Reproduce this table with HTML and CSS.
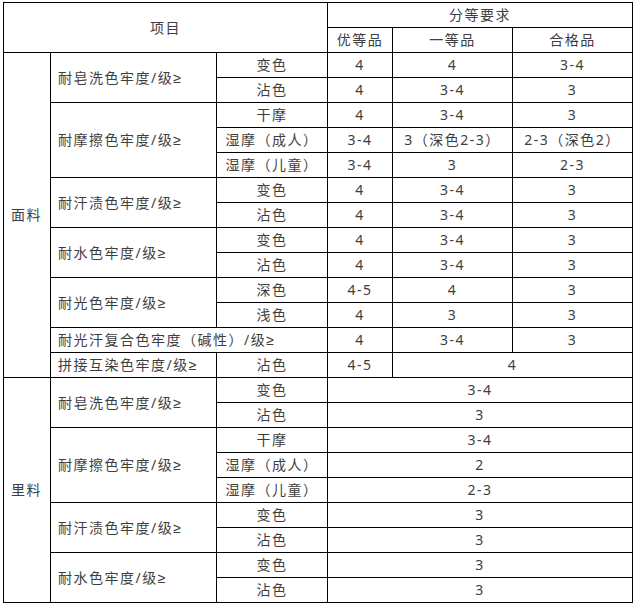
FILE: index.html
```html
<!DOCTYPE html>
<html lang="zh">
<head>
<meta charset="utf-8">
<link rel="stylesheet" href="styles.css">
</head>
<body>
<table class="spec">
<colgroup>
<col class="c1"><col class="c2"><col class="c3"><col class="c4"><col class="c5"><col class="c6">
</colgroup>
<tbody>
<tr><td colspan="3" rowspan="2">项目</td><td colspan="3">分等要求</td></tr>
<tr><td>优等品</td><td>一等品</td><td>合格品</td></tr>

<tr><td rowspan="13" class="grp">面料</td><td rowspan="2" class="item">耐皂洗色牢度/级<span class="ge">≥</span></td><td>变色</td><td>4</td><td>4</td><td>3-4</td></tr>
<tr><td>沾色</td><td>4</td><td>3-4</td><td>3</td></tr>
<tr><td rowspan="3" class="item">耐摩擦色牢度/级<span class="ge">≥</span></td><td>干摩</td><td>4</td><td>3-4</td><td>3</td></tr>
<tr><td>湿摩（成人）</td><td>3-4</td><td>3（深色2-3）</td><td>2-3（深色2）</td></tr>
<tr><td>湿摩（儿童）</td><td>3-4</td><td>3</td><td>2-3</td></tr>
<tr><td rowspan="2" class="item">耐汗渍色牢度/级<span class="ge">≥</span></td><td>变色</td><td>4</td><td>3-4</td><td>3</td></tr>
<tr><td>沾色</td><td>4</td><td>3-4</td><td>3</td></tr>
<tr><td rowspan="2" class="item">耐水色牢度/级<span class="ge">≥</span></td><td>变色</td><td>4</td><td>3-4</td><td>3</td></tr>
<tr><td>沾色</td><td>4</td><td>3-4</td><td>3</td></tr>
<tr><td rowspan="2" class="item">耐光色牢度/级<span class="ge">≥</span></td><td>深色</td><td>4-5</td><td>4</td><td>3</td></tr>
<tr><td>浅色</td><td>4</td><td>3</td><td>3</td></tr>
<tr><td colspan="2" class="item">耐光汗复合色牢度（碱性）/级<span class="ge">≥</span></td><td>4</td><td>3-4</td><td>3</td></tr>
<tr><td class="item">拼接互染色牢度/级<span class="ge">≥</span></td><td>沾色</td><td>4-5</td><td colspan="2">4</td></tr>

<tr><td rowspan="9" class="grp">里料</td><td rowspan="2" class="item">耐皂洗色牢度/级<span class="ge">≥</span></td><td>变色</td><td colspan="3">3-4</td></tr>
<tr><td>沾色</td><td colspan="3">3</td></tr>
<tr><td rowspan="3" class="item">耐摩擦色牢度/级<span class="ge">≥</span></td><td>干摩</td><td colspan="3">3-4</td></tr>
<tr><td>湿摩（成人）</td><td colspan="3">2</td></tr>
<tr><td>湿摩（儿童）</td><td colspan="3">2-3</td></tr>
<tr><td rowspan="2" class="item">耐汗渍色牢度/级<span class="ge">≥</span></td><td>变色</td><td colspan="3">3</td></tr>
<tr><td>沾色</td><td colspan="3">3</td></tr>
<tr><td rowspan="2" class="item">耐水色牢度/级<span class="ge">≥</span></td><td>变色</td><td colspan="3">3</td></tr>
<tr><td>沾色</td><td colspan="3">3</td></tr>
</tbody>
</table>
</body>
</html>
```
FILE: styles.css
```css
html, body {
  margin: 0;
  padding: 0;
  background: #ffffff;
}
.spec {
  margin: 2px 0 0 3px;
  border-collapse: collapse;
  table-layout: fixed;
  width: 629px;
  font-family: "Noto Sans", "Noto Sans CJK SC", sans-serif;
  font-size: 14px;
  letter-spacing: 1.5px;
  color: #3e3e3e;
}
.c1 { width: 47px; }
.c2 { width: 166px; }
.c3 { width: 111px; }
.c4 { width: 65px; }
.c5 { width: 120px; }
.c6 { width: 120px; }
.spec td {
  border: 1px solid #000;
  height: 24px;
  padding: 0;
  line-height: 20px;
  text-align: center;
  vertical-align: middle;
  white-space: nowrap;
}
.spec td.item {
  text-align: left;
  padding-left: 7px;
}
.spec td.grp {
  text-align: left;
  padding-left: 7px;
}
.ge {
  font-family: "Liberation Sans", sans-serif;
}
```
